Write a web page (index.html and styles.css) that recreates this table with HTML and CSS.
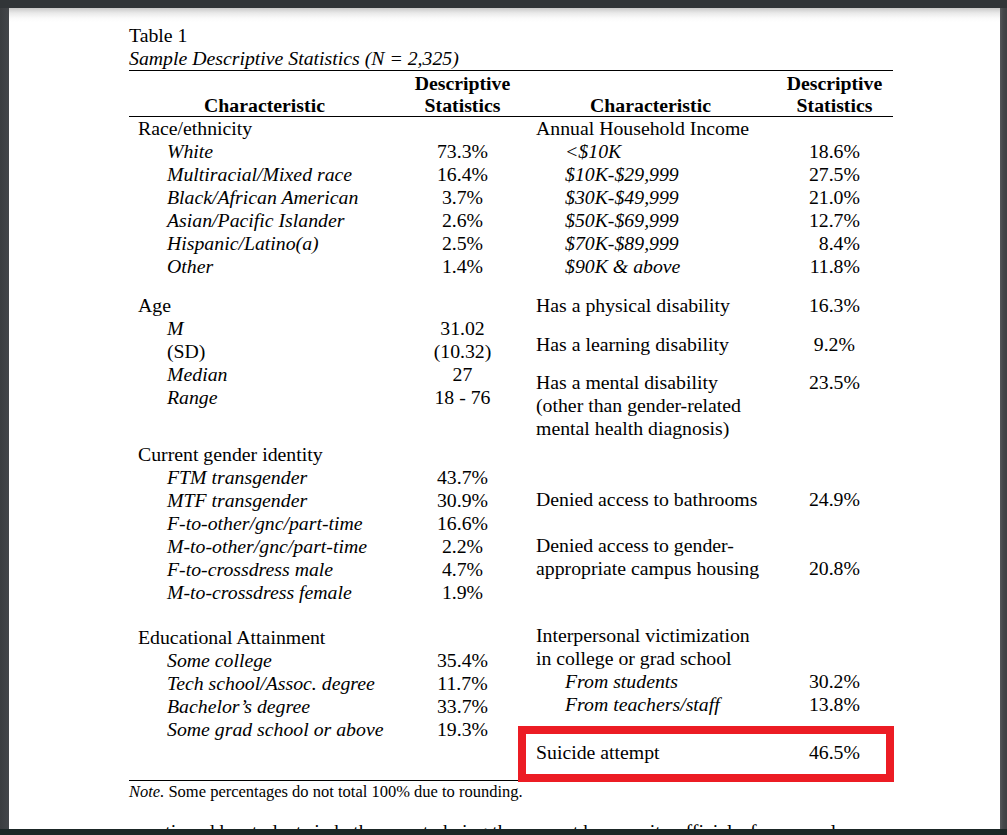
FILE: index.html
```html
<!DOCTYPE html>
<html lang="en">
<head>
<meta charset="utf-8">
<title>Table 1 - Sample Descriptive Statistics</title>
<link rel="stylesheet" href="styles.css">
</head>
<body>
<div class="frame">
  <div class="topbar"></div>
  <div class="main">
    <div class="left-strip"></div>
    <div class="page">
      <div class="content">
        <p class="table-num">Table 1</p>
        <p class="table-title">Sample Descriptive Statistics (N = 2,325)</p>
        <div class="stats">
          <div class="stats-head">
            <div class="h-char">Characteristic</div>
            <div class="h-desc">Descriptive<br>Statistics</div>
            <div class="h-char">Characteristic</div>
            <div class="h-desc">Descriptive<br>Statistics</div>
          </div>
          <div class="stats-body">
            <div class="half half-left">
              <div class="row"><span class="cat">Race/ethnicity</span><span class="val"></span></div>
              <div class="row"><span class="sub it">White</span><span class="val">73.3%</span></div>
              <div class="row"><span class="sub it">Multiracial/Mixed race</span><span class="val">16.4%</span></div>
              <div class="row"><span class="sub it">Black/African American</span><span class="val">3.7%</span></div>
              <div class="row"><span class="sub it">Asian/Pacific Islander</span><span class="val">2.6%</span></div>
              <div class="row"><span class="sub it">Hispanic/Latino(a)</span><span class="val">2.5%</span></div>
              <div class="row"><span class="sub it">Other</span><span class="val">1.4%</span></div>

              <div class="row mt16"><span class="cat">Age</span><span class="val"></span></div>
              <div class="row"><span class="sub it">M</span><span class="val">31.02</span></div>
              <div class="row"><span class="sub">(SD)</span><span class="val">(10.32)</span></div>
              <div class="row"><span class="sub it">Median</span><span class="val">27</span></div>
              <div class="row"><span class="sub it">Range</span><span class="val">18 - 76</span></div>

              <div class="row mt34"><span class="cat">Current gender identity</span><span class="val"></span></div>
              <div class="row"><span class="sub it">FTM transgender</span><span class="val">43.7%</span></div>
              <div class="row"><span class="sub it">MTF transgender</span><span class="val">30.9%</span></div>
              <div class="row"><span class="sub it">F-to-other/gnc/part-time</span><span class="val">16.6%</span></div>
              <div class="row"><span class="sub it">M-to-other/gnc/part-time</span><span class="val">2.2%</span></div>
              <div class="row"><span class="sub it">F-to-crossdress male</span><span class="val">4.7%</span></div>
              <div class="row"><span class="sub it">M-to-crossdress female</span><span class="val">1.9%</span></div>

              <div class="row mt22"><span class="cat">Educational Attainment</span><span class="val"></span></div>
              <div class="row"><span class="sub it">Some college</span><span class="val">35.4%</span></div>
              <div class="row"><span class="sub it">Tech school/Assoc. degree</span><span class="val">11.7%</span></div>
              <div class="row"><span class="sub it">Bachelor’s degree</span><span class="val">33.7%</span></div>
              <div class="row"><span class="sub it">Some grad school or above</span><span class="val">19.3%</span></div>
            </div>

            <div class="half half-right">
              <div class="row"><span class="cat">Annual Household Income</span><span class="val"></span></div>
              <div class="row"><span class="sub it">&lt;$10K</span><span class="val">18.6%</span></div>
              <div class="row"><span class="sub it">$10K-$29,999</span><span class="val">27.5%</span></div>
              <div class="row"><span class="sub it">$30K-$49,999</span><span class="val">21.0%</span></div>
              <div class="row"><span class="sub it">$50K-$69,999</span><span class="val">12.7%</span></div>
              <div class="row"><span class="sub it">$70K-$89,999</span><span class="val">8.4%</span></div>
              <div class="row"><span class="sub it">$90K &amp; above</span><span class="val">11.8%</span></div>

              <div class="row mt16"><span class="cat">Has a physical disability</span><span class="val">16.3%</span></div>
              <div class="row mt16"><span class="cat">Has a learning disability</span><span class="val val-mid">9.2%</span></div>
              <div class="row mt15"><span class="cat">Has a mental disability<br>(other than gender-related<br>mental health diagnosis)</span><span class="val">23.5%</span></div>

              <div class="row mt48"><span class="cat">Denied access to bathrooms</span><span class="val">24.9%</span></div>
              <div class="row row-end mt23"><span class="cat">Denied access to gender-<br>appropriate campus housing</span><span class="val">20.8%</span></div>

              <div class="row mt44"><span class="cat">Interpersonal victimization</span><span class="val"></span></div>
              <div class="row"><span class="cat">in college or grad school</span><span class="val"></span></div>
              <div class="row"><span class="sub it">From students</span><span class="val">30.2%</span></div>
              <div class="row"><span class="sub it">From teachers/staff</span><span class="val">13.8%</span></div>

              <div class="row row-flag mt25"><span class="cat">Suicide attempt</span><span class="val">46.5%</span><span class="flag-box"></span></div>
            </div>
          </div>
        </div>
        <p class="note"><i>Note.</i> Some percentages do not total 100% due to rounding.</p>
        <p class="body-text">questioned by students in bathrooms to being thrown out by security officials, for example</p>
      </div>
    </div>
    <div class="right-strip"></div>
  </div>
</div>
</body>
</html>
```

FILE: styles.css
```css
* { box-sizing: border-box; }

html, body {
  margin: 0;
  padding: 0;
}

body {
  width: 1007px;
  height: 835px;
  overflow: hidden;
  background: #1b2626;
  font-family: "Liberation Serif", "Times New Roman", serif;
  color: #000;
}

.frame {
  height: 829px;
  display: flex;
  flex-direction: column;
  background: #323639;
}

.topbar {
  height: 8px;
  background: #313538;
  flex: none;
}

.main {
  flex: 1;
  display: flex;
  min-height: 0;
}

.left-strip {
  width: 9px;
  flex: none;
  background: linear-gradient(to right, #3a3d40, #43464a);
}

.page {
  width: 991px;
  flex: none;
  background:
    linear-gradient(to bottom, #c9c9c9 0px, #e9e9e9 5px, #fafafa 10px, #ffffff 14px) top / 100% 14px no-repeat,
    #ffffff;
  overflow: hidden;
  position: relative;
}

.right-strip {
  flex: 1;
  background: linear-gradient(to right, #56595c, #45484b 3px, #3d4043);
}

.content {
  padding: 16px 0 0 120px;
  font-size: 19.8px;
}

.table-num,
.table-title {
  margin: 0;
  line-height: 23px;
}

.table-title {
  font-style: italic;
}

.stats {
  width: 764px;
  border-top: 1px solid #000;
  border-bottom: 1px solid #000;
}

.stats-head {
  display: grid;
  grid-template-columns: 271px 125px 251px 117px;
  border-bottom: 1px solid #000;
  font-weight: bold;
  line-height: 22px;
  text-align: center;
  padding-top: 1px;
}

.h-char {
  align-self: end;
}

.stats-body {
  display: grid;
  grid-template-columns: 396px 368px;
  align-items: start;
  padding-bottom: 16px;
}

.half {
  display: flex;
  flex-direction: column;
}

.row {
  display: grid;
  line-height: 23px;
  align-items: start;
}

.half-left .row {
  grid-template-columns: 271px 125px;
}

.half-right .row {
  grid-template-columns: 251px 117px;
}

.cat { padding-left: 9px; white-space: nowrap; }
.sub { padding-left: 38px; white-space: nowrap; }
.half-right .cat { padding-left: 11px; }
.half-right .sub { padding-left: 40px; }

.it { font-style: italic; }

.half-left .val {
  text-align: center;
}

.half-right .val {
  text-align: right;
  padding-right: 33px;
}

.half-right .val.val-mid {
  padding-right: 38px;
}

.row-end {
  align-items: end;
}

.mt15 { margin-top: 15px; }
.mt16 { margin-top: 16px; }
.mt22 { margin-top: 22px; }
.mt23 { margin-top: 23px; }
.mt25 { margin-top: 25px; }
.mt34 { margin-top: 34px; }
.mt44 { margin-top: 44px; }
.mt48 { margin-top: 48px; }

.row-flag {
  position: relative;
}

.flag-box {
  position: absolute;
  left: -7px;
  top: -15px;
  width: 376px;
  height: 56px;
  border: 8px solid #ec1c24;
  z-index: 2;
}

.note {
  margin: 0;
  padding-top: 1px;
  font-size: 16.5px;
  line-height: 20px;
}

.body-text {
  margin: 18px 0 0;
  line-height: 23px;
  white-space: nowrap;
}
```
